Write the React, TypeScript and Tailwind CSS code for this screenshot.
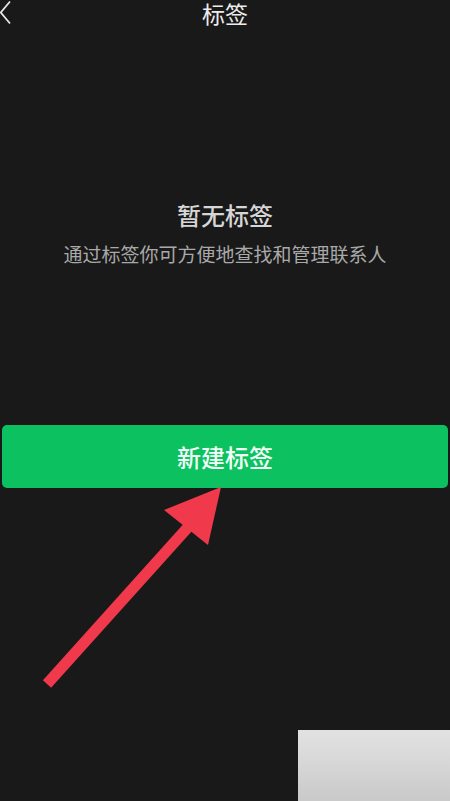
import React from "react";

export default function App() {
  return (
    <div
      className="relative w-[450px] h-[801px] overflow-hidden bg-[#191919] flex flex-col"
      style={{ fontFamily: '"Noto Sans CJK SC", "Noto Sans", sans-serif' }}
    >
      {/* Header */}
      <div className="relative h-[26px] flex items-center justify-center">
        <svg className="absolute left-0 top-0" width="12" height="26" viewBox="0 0 12 26">
          <path d="M10 1.5 L0.8 12.5 L10 23.5" fill="none" stroke="#e6e6e6" strokeWidth="1.8" />
        </svg>
        <span className="text-[23px] leading-none text-[#ececec]">标签</span>
      </div>

      {/* Empty state */}
      <div className="flex flex-col items-center mt-[177px]">
        <div className="text-[24px] leading-none text-[#d6d6d6] font-medium">暂无标签</div>
        <div className="mt-[17px] text-[19px] leading-none text-[#a9a9a9]">
          通过标签你可方便地查找和管理联系人
        </div>
      </div>

      {/* Button */}
      <div className="px-[2px] mt-[162px]">
        <button className="w-full h-[63px] rounded-[5px] bg-[#0bc160] flex items-center justify-center text-[24px] text-[#f2fff6] font-medium">
          新建标签
        </button>
      </div>

      {/* Arrow annotation */}
      <svg className="absolute left-0 top-0 pointer-events-none" width="450" height="801" viewBox="0 0 450 801">
        <line x1="47" y1="684" x2="190" y2="525" stroke="#f0394b" strokeWidth="11" />
        <polygon points="221,487 164,510 208,545" fill="#f0394b" />
      </svg>

      {/* Watermark patch */}
      <div className="absolute left-[298px] top-[730px] w-[152px] h-[71px] bg-gradient-to-b from-[#e2e2e2] via-[#d6d6d6] to-[#c9c9c9]" />
    </div>
  );
}
